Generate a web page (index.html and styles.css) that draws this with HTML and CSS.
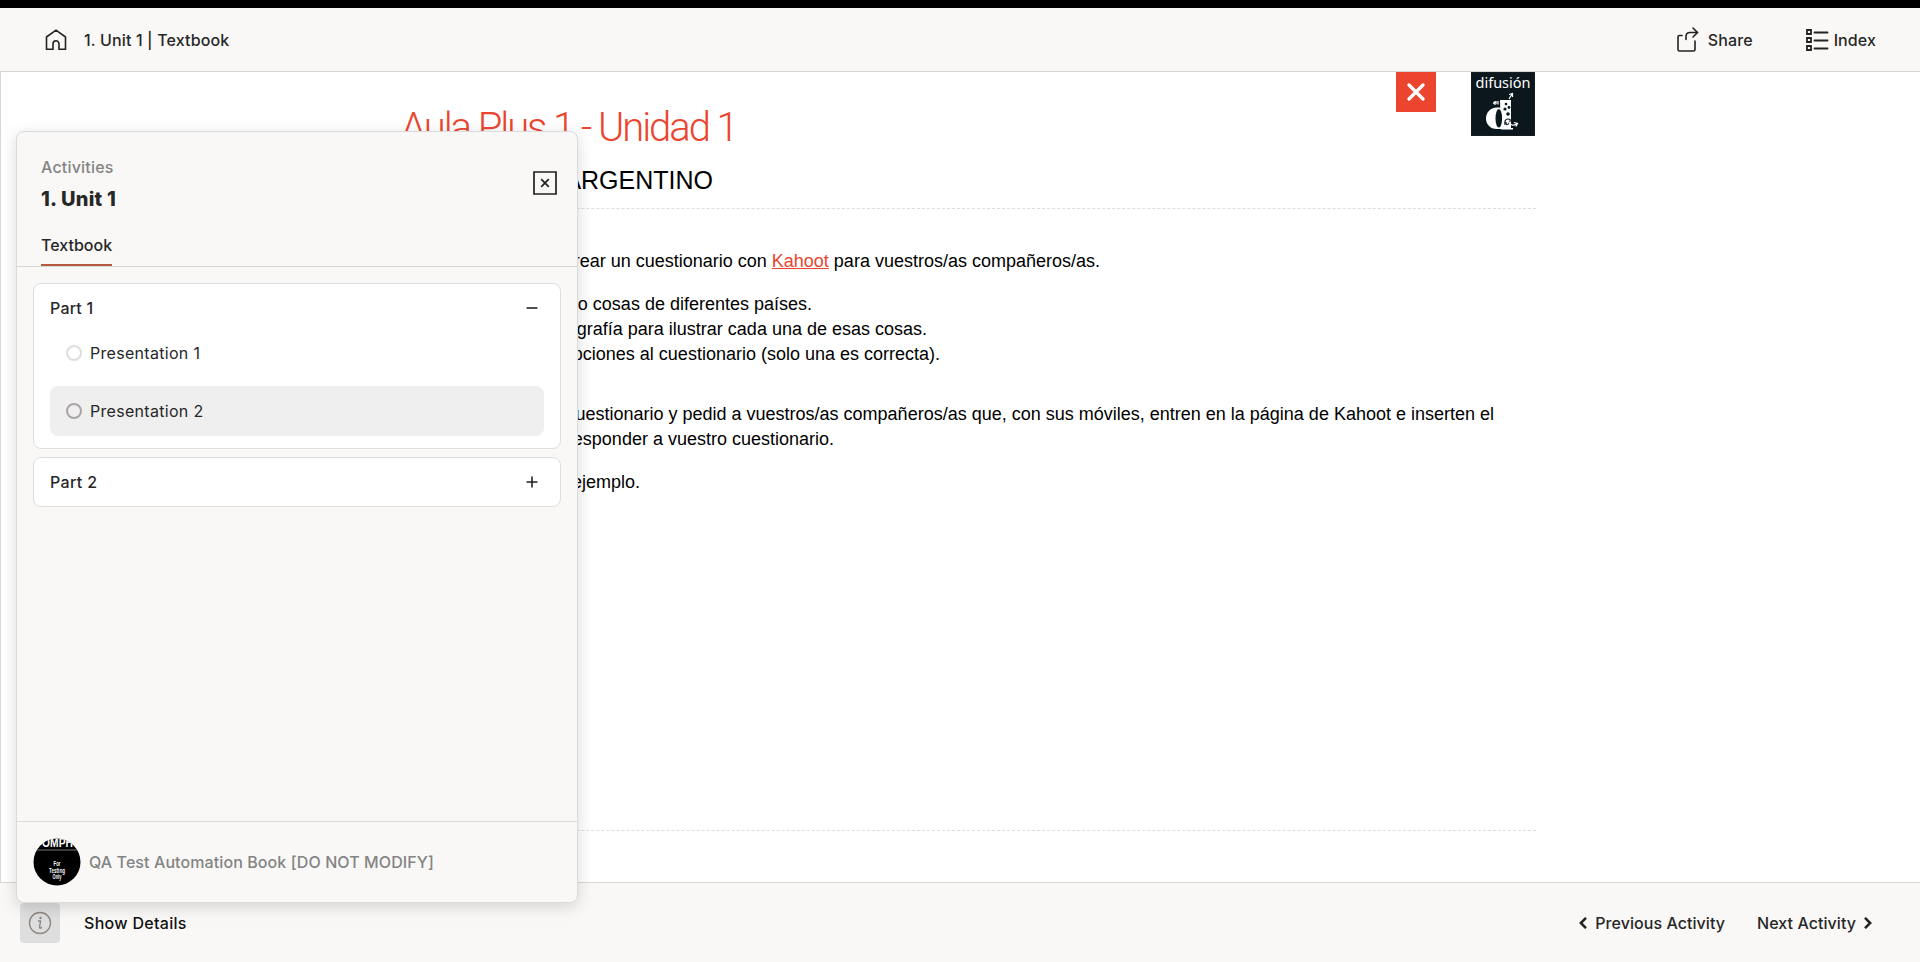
FILE: index.html
```html
<!DOCTYPE html>
<html lang="es">
<head>
<meta charset="utf-8">
<title>1. Unit 1 | Textbook</title>
<link rel="stylesheet" href="styles.css">
</head>
<body>
<div class="app">
  <header class="topbar">
    <svg class="home" width="22" height="22" viewBox="0 0 22 22"><path d="M1.500 8 11 1.200 20.500 8V20.200H14V15a3 3.300 0 0 0-6 0V20.200H1.500Z"/></svg>
    <span class="crumb">1. Unit 1 | Textbook</span>
    <button class="tool share"><svg width="24" height="26" viewBox="0 0 24 26"><path d="M6 8.500H3.500Q2 8.500 2 10V22.500Q2 24 3.500 24H17.500Q19 24 19 22.500V14M10 12.500V9.500Q10 5.500 14 5.500H21.500M17 1 21.500 5.500 17 10"/></svg><span>Share</span></button>
    <button class="tool index"><svg width="24" height="24" viewBox="0 0 24 24"><path d="M2 2h4v4H2ZM2 10h4v4H2ZM2 18h4v4H2ZM9.500 4.500H22.500M9.500 12.500H22.500M9.500 20.500H22.500"/></svg><span>Index</span></button>
  </header>

  <main class="stage">
    <article class="sheet">
      <div class="sheet-head">
        <div class="titles">
          <h1>Aula Plus 1 - Unidad 1</h1>
          <h2>ARGENTINO</h2>
        </div>
        <div class="close-red"><svg width="18" height="18" viewBox="0 0 18 18"><path d="M2 2 16 16M16 2 2 16"/></svg></div>
        <svg class="brand" width="64" height="64" viewBox="0 0 64 64">
          <rect width="64" height="64" fill="#0c171d"/>
          <text x="4.500" y="16" textLength="55" lengthAdjust="spacing">difusión</text>
          <path class="w" d="M29 28H40V56H42V57.500H30ZM26 35.500H31V57H26C19 57 15 52 15 46.500S19 35.500 26 35.500Z"/>
          <ellipse cx="27.800" cy="46.300" rx="3.300" ry="9.300" class="k"/>
          <circle class="k" cx="35" cy="32" r="1.300"/><circle class="k" cx="38" cy="35.500" r="1.400"/><circle class="k" cx="34" cy="37" r="1.600"/><circle class="k" cx="37" cy="42" r="1.800"/>
          <path class="d" d="M34 53q-1-6 3-6t1 4-3-1"/>
          <path class="l" d="M38 27 41 22M38 22.500 41.500 21.500 41.500 25M22.500 31.500l3-2M27 29v3.500M38 50q2 5 8 2M43 50.500l3.500 1-1.500 3"/>
          <circle class="l" cx="24" cy="31" r="1.200"/>
        </svg>
      </div>
      <section class="copy">
        <p class="l1">crear un cuestionario con <a>Kahoot</a> para vuestros/as compañeros/as.</p>
        <ul><li class="l2">cuatro cosas de diferentes países.</li><li class="l3">fotografía para ilustrar cada una de esas cosas.</li><li class="l4">opciones al cuestionario (solo una es correcta).</li></ul>
        <p class="gap"><span class="l5">cuestionario y pedid a vuestros/as compañeros/as que, con sus móviles, entren en la página de Kahoot e inserten el</span><span class="l6">responder a vuestro cuestionario.</span></p>
        <p class="l7">ejemplo.</p>
      </section>
    </article>
  </main>

  <footer class="bottombar">
    <div class="info"><svg width="24" height="24" viewBox="0 0 24 24"><circle cx="12" cy="12" r="10.500"/><path d="M10 10H12.500L11.500 16.500Q11.500 17.500 14 16.500"/><circle class="dot" cx="12.500" cy="7" r="1.200"/></svg></div>
    <span class="details">Show Details</span>
    <button class="nav prev"><svg width="8" height="12" viewBox="0 0 8 12"><path d="M7 .8 1.800 6 7 11.200"/></svg><span>Previous Activity</span></button>
    <button class="nav next"><span>Next Activity</span><svg width="8" height="12" viewBox="0 0 8 12"><path d="M1 .8 6.200 6 1 11.200"/></svg></button>
  </footer>

  <aside class="panel">
    <div class="panel-head">
      <div class="panel-title"><span class="eyebrow">Activities</span><strong>1. Unit 1</strong></div>
      <button class="close-box"><svg width="24" height="24" viewBox="0 0 24 24"><path d="M1 1H23V23H1ZM8.200 8.200 15.800 15.800M15.800 8.200 8.200 15.800"/></svg></button>
    </div>
    <nav class="tabs"><span class="tab">Textbook</span></nav>
    <div class="parts">
      <section class="card">
        <div class="card-head"><span>Part 1</span><svg width="12" height="12" viewBox="0 0 12 12"><path d="M.5 6H11.500"/></svg></div>
        <div class="row first"><i></i><span>Presentation 1</span></div>
        <div class="row active"><i></i><span>Presentation 2</span></div>
      </section>
      <section class="card">
        <div class="card-head two"><span>Part 2</span><svg width="12" height="12" viewBox="0 0 12 12"><path d="M.5 6H11.500M6 .5V11.500"/></svg></div>
      </section>
    </div>
    <div class="book">
      <svg class="avatar" width="48" height="48" viewBox="0 0 48 48"><defs><clipPath id="disc"><circle cx="24" cy="24" r="23.500"/></clipPath></defs><circle cx="24" cy="24" r="23.500"/><g clip-path="url(#disc)"><text x="9" y="8.500" font-size="12" textLength="31" lengthAdjust="spacingAndGlyphs">OMPH</text><path d="M0 12H48"/><g font-size="7.500" text-anchor="middle"><text x="24" y="28" textLength="7" lengthAdjust="spacingAndGlyphs">For</text><text x="24" y="34.500" textLength="16" lengthAdjust="spacingAndGlyphs">Testing</text><text x="24" y="40.500" textLength="9" lengthAdjust="spacingAndGlyphs">Only</text></g></g></svg>
      <span>QA Test Automation Book [DO NOT MODIFY]</span>
    </div>
  </aside>
</div>
</body>
</html>
```
FILE: styles.css
```css
* { box-sizing: border-box; }
body { margin: 0; overflow: hidden; font: 500 16px/20px Inter, sans-serif; color: #272727; background: #fff; }
button { display: flex; align-items: center; padding: 0; border: 0; background: none; font: inherit; color: inherit; }
svg { display: block; flex: none; fill: none; stroke: #222; }
.app { position: relative; display: grid; grid-template-rows: 72px 810px 80px; height: 962px; }
.topbar { display: flex; align-items: center; padding: 0 44px 0 45px; border-top: 8px solid #000; border-bottom: 1px solid #d8d7d6; background: #f9f8f6; }
.home { stroke-width: 1.6; }
.crumb { margin: 0 auto 0 17px; letter-spacing: .14px; }
.tool svg { stroke-width: 1.8; stroke-linecap: round; }
.share { gap: 8px; margin-right: 52px; letter-spacing: .1px; }
.share svg { stroke-width: 1.6; }
.index { gap: 5px; letter-spacing: .1px; }

.stage { border-left: 1px solid #d8d7d6; overflow: hidden; }
.sheet { display: flex; flex-direction: column; width: 1135px; height: 759px; margin-left: 400px; border-bottom: 1px dashed #ddd; }
.sheet-head { display: flex; height: 137px; padding-right: 1px; border-bottom: 1px dashed #ddd; }
.titles { flex: 1; }
h1 { margin: 32px 0 0; font: 300 40px/48px Roboto, sans-serif; letter-spacing: -2.05px; color: #eb452f; white-space: nowrap; }
h2 { width: 312px; margin: 13px 0 0; font: 400 25px/30px "Liberation Sans", sans-serif; color: #000; text-align: right; }
.close-red { display: grid; place-items: center; width: 40px; height: 40px; margin-right: 35.500px; background: #eb452f; }
.close-red svg { stroke: #fff; stroke-width: 3.3; stroke-linecap: round; }
.brand text { font: 14.5px "Noto Sans", sans-serif; fill: #fff; stroke: none; }
.brand .w { fill: #fff; stroke: none; }
.brand .k { fill: #0c171d; stroke: none; }
.brand .d { stroke: #0c171d; stroke-width: 1.2; }
.brand .l { stroke: #fff; stroke-width: 1.2; }
.copy { padding-top: 40px; font: 400 18px/25px "Liberation Sans", sans-serif; color: #000; white-space: nowrap; }
.copy p, .copy ul { margin: 0 0 18px; padding: 0; list-style: none; }
.copy p, .copy li, .copy p span { display: block; text-align: right; }
.copy .gap { margin-top: 35px; }
.copy a { color: #eb452f; text-decoration: underline; }
.l1 { width: 699px; }
.l2 { width: 411px; }
.l3 { width: 526px; }
.l4 { width: 539px; }
.l5 { width: 1093px; }
.l6 { width: 433px; }
.l7 { width: 239px; }

.bottombar { display: flex; align-items: center; padding: 1px 48px 0 20px; border-top: 1px solid #d8d7d6; background: #f9f8f6; }
.info { display: grid; place-items: center; width: 40px; height: 40px; border-radius: 4px; background: #dedede; }
.info svg { stroke: #8f8883; stroke-width: 1.4; }
.info .dot { fill: #8f8883; stroke: none; }
.details { margin: 0 auto 0 24px; color: #111; letter-spacing: .3px; }
.nav { letter-spacing: .06px; }
.nav svg { stroke-width: 2.5; }
.prev { gap: 8px; margin-right: 32px; }
.next { gap: 8px; }

/* Activity drawer floating above the sheet */
.panel { position: absolute; left: 16px; top: 131px; display: flex; flex-direction: column; width: 562px; height: 772px; border: 1px solid #dbdbdb; border-radius: 8px; background: #f9f8f6; box-shadow: 0 4px 16px rgba(0,0,0,.15); }
.panel-head { display: flex; justify-content: space-between; height: 98px; padding: 25px 20px 0 24px; }
.panel-title { display: flex; flex-direction: column; gap: 10px; }
.eyebrow { color: #848484; letter-spacing: .2px; }
.panel-title strong { font-size: 20px; line-height: 24px; font-weight: 800; letter-spacing: .2px; }
.close-box { height: 24px; margin-top: 14px; }
.close-box svg { stroke-width: 1.7; }
.tabs { display: flex; height: 37px; padding-left: 24px; border-bottom: 1px solid #d8d7d6; }
.tab { padding-top: 5px; border-bottom: 2px solid #b65a3f; }
.parts { display: flex; flex-direction: column; gap: 8px; flex: 1; padding: 16px; }
.card { padding: 0 16px; border: 1px solid #dedede; border-radius: 8px; background: #fff; }
.card-head { display: flex; align-items: center; justify-content: space-between; height: 48px; padding-right: 6px; letter-spacing: .2px; }
.two { letter-spacing: .35px; }
.card-head svg { stroke-width: 1.6; }
.row { display: flex; align-items: center; gap: 8px; height: 50px; margin-bottom: 12px; padding-left: 16px; border-radius: 8px; font-weight: 400; letter-spacing: .3px; }
.row i { width: 16px; height: 16px; border: 2px solid #dedede; border-radius: 50%; }
.first { height: 42px; }
.active { background: #efefef; }
.active i { border-color: #aaa5a3; }
.book { display: flex; align-items: center; gap: 8px; height: 81px; padding: 0 16px; border-top: 1px solid #dbdbdb; color: #848484; letter-spacing: .09px; }
.avatar circle { fill: #000; stroke: none; }
.avatar text { font-family: "Liberation Sans", sans-serif; font-weight: 700; fill: #fff; stroke: none; }
.avatar path { stroke: #777; }
```
